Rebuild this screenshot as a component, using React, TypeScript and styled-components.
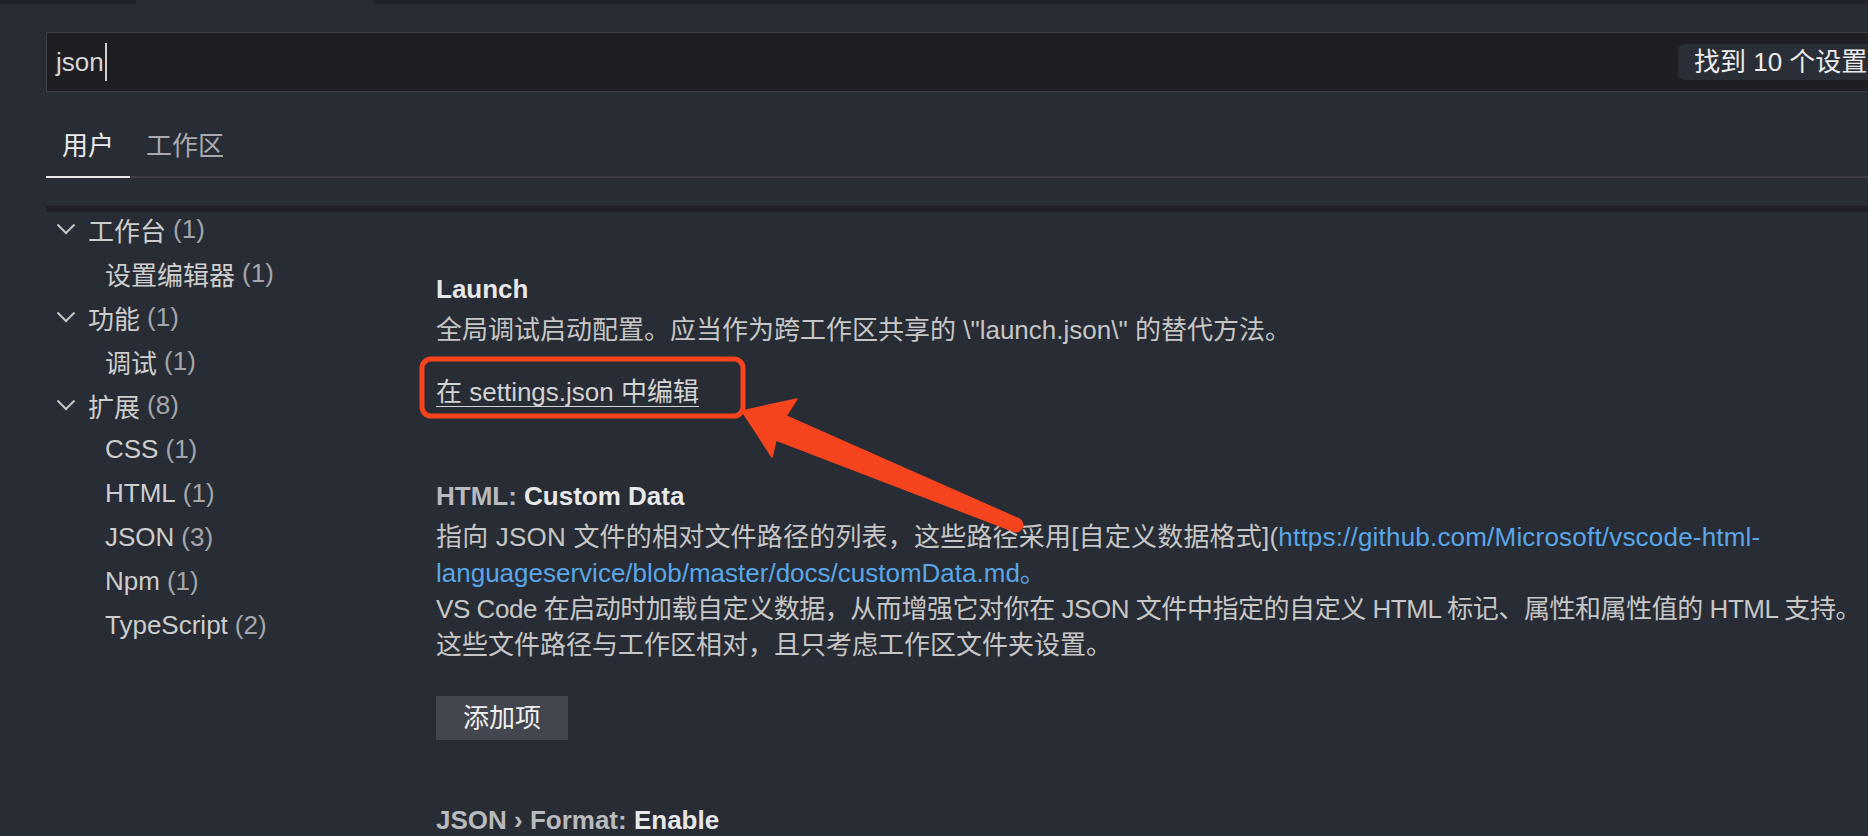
import React from "react";
import styled, { createGlobalStyle } from "styled-components";

const FONT = `"Liberation Sans", "Noto Sans CJK SC", sans-serif`;

const GlobalStyle = createGlobalStyle`
  html, body {
    margin: 0;
    padding: 0;
    background: #282c34;
    overflow: hidden;
  }
  * { box-sizing: border-box; }
`;

const Page = styled.div`
  position: relative;
  width: 1868px;
  height: 836px;
  overflow: hidden;
  background: #282c34;
  font-family: ${FONT};
  font-size: 26px;
  color: #cccccc;
`;

const TopStrip = styled.div`
  display: flex;
  height: 4px;
`;

const StripSeg = styled.div<{ $dark?: boolean; $w?: number }>`
  height: 100%;
  background: ${(p) => (p.$dark ? "#1f2228" : "transparent")};
  ${(p) => (p.$w ? `width: ${p.$w}px; flex-shrink: 0;` : "flex: 1;")}
`;

const Main = styled.div`
  padding-left: 46px;
`;

const SearchBox = styled.div`
  margin-top: 28px;
  width: 1900px;
  height: 60px;
  display: flex;
  align-items: center;
  border: 1px solid #3d4047;
  background: #1e1f23;
  padding-left: 9px;
`;

const QueryArea = styled.div`
  width: 1622px;
  flex-shrink: 0;
  display: flex;
  align-items: center;
`;

const QueryText = styled.span`
  font-size: 26px;
  line-height: 40px;
  color: #d6d6d6;
`;

const Caret = styled.span`
  display: inline-block;
  width: 2px;
  height: 38px;
  margin-left: 1px;
  background: #cfcfcf;
`;

const Badge = styled.div`
  height: 36px;
  padding: 0 16px;
  border-radius: 6px;
  background: #2a2e37;
  color: #ececec;
  font-size: 26px;
  line-height: 36px;
  white-space: nowrap;
`;

const TabBar = styled.div`
  margin-top: 30px;
  display: flex;
  border-bottom: 2px solid #3b3d42;
`;

const Tab = styled.div<{ $active?: boolean }>`
  padding: 0 16px 6px;
  line-height: 48px;
  font-size: 26px;
  margin-bottom: -2px;
  border-bottom: 2px solid ${(p) => (p.$active ? "#e8e8e8" : "transparent")};
  color: ${(p) => (p.$active ? "#ececec" : "#a9abb0")};
`;

const Body = styled.div`
  margin-top: 28px;
  padding-top: 1px;
  display: flex;
  background-image: linear-gradient(#1f2125, #1f2125);
  background-size: 100% 6px;
  background-repeat: no-repeat;
`;

const Tree = styled.div`
  width: 390px;
  flex-shrink: 0;
`;

const TreeRow = styled.div<{ $indent: number }>`
  height: 44px;
  display: flex;
  align-items: center;
  padding-left: ${(p) => p.$indent}px;
  font-size: 26px;
  color: #cdcdcd;
  white-space: nowrap;
`;

const ChevronBox = styled.svg`
  width: 20px;
  height: 12px;
  margin-right: 12px;
  flex-shrink: 0;
`;

const Count = styled.span`
  color: #a4a6aa;
  margin-left: 7px;
`;

const Content = styled.div`
  flex: 1;
  padding-top: 64px;
  min-width: 0;
`;

const SettingItem = styled.div<{ $top: number }>`
  padding-top: ${(p) => p.$top}px;
`;

const Title = styled.div`
  font-size: 26px;
  line-height: 36px;
  font-weight: 700;
  color: #e8e8e8;
  white-space: nowrap;
`;

const Category = styled.span`
  color: #b8babe;
`;

const Description = styled.div`
  margin-top: 5px;
  font-size: 26px;
  line-height: 36px;
  color: #c6c6c6;
`;

const DescLine = styled.div<{ $track?: number }>`
  white-space: nowrap;
  letter-spacing: ${(p) => p.$track ?? 0}px;
`;

const UrlLink = styled.span`
  color: #59a7e8;
`;

const EditLink = styled.div`
  margin-top: 26px;
  font-size: 26px;
  line-height: 36px;
  color: #d2d2d2;
  text-decoration: underline;
  text-underline-offset: 5px;
  text-decoration-thickness: 1px;
  white-space: nowrap;
`;

const AddButton = styled.button`
  margin-top: 33px;
  height: 44px;
  padding: 0 27px;
  border: none;
  border-radius: 0;
  background: #43464e;
  color: #f0f0f0;
  font-family: ${FONT};
  font-size: 26px;
  line-height: 44px;
`;

const Annotation = styled.svg`
  position: absolute;
  left: 0;
  top: 0;
  width: 1868px;
  height: 836px;
  pointer-events: none;
`;

const Chevron = () => (
  <ChevronBox viewBox="0 0 20 12">
    <polyline points="1.5,1.5 10,10 18.5,1.5" fill="none" stroke="#c5c5c5" strokeWidth="2" />
  </ChevronBox>
);

type TreeItem = { label: string; count: number; group?: boolean };

const treeItems: TreeItem[] = [
  { label: "工作台", count: 1, group: true },
  { label: "设置编辑器", count: 1 },
  { label: "功能", count: 1, group: true },
  { label: "调试", count: 1 },
  { label: "扩展", count: 8, group: true },
  { label: "CSS", count: 1 },
  { label: "HTML", count: 1 },
  { label: "JSON", count: 3 },
  { label: "Npm", count: 1 },
  { label: "TypeScript", count: 2 },
];

export default function App() {
  return (
    <>
      <GlobalStyle />
      <Page>
        <TopStrip>
          <StripSeg $dark $w={136} />
          <StripSeg $w={238} />
          <StripSeg $dark />
        </TopStrip>
        <Main>
          <SearchBox>
            <QueryArea>
              <QueryText>json</QueryText>
              <Caret />
            </QueryArea>
            <Badge>找到 10 个设置</Badge>
          </SearchBox>
          <TabBar>
            <Tab $active>用户</Tab>
            <Tab>工作区</Tab>
          </TabBar>
          <Body>
            <Tree>
              {treeItems.map((t) => (
                <TreeRow key={t.label} $indent={t.group ? 10 : 59}>
                  {t.group && <Chevron />}
                  <span>{t.label}</span>
                  <Count>({t.count})</Count>
                </TreeRow>
              ))}
            </Tree>
            <Content>
              <SettingItem $top={0}>
                <Title>Launch</Title>
                <Description>
                  <DescLine>全局调试启动配置。应当作为跨工作区共享的 \"launch.json\" 的替代方法。</DescLine>
                </Description>
                <EditLink>在 settings.json 中编辑</EditLink>
              </SettingItem>
              <SettingItem $top={68}>
                <Title>
                  <Category>HTML: </Category>Custom Data
                </Title>
                <Description>
                  <DescLine $track={0.2}>
                    指向 JSON 文件的相对文件路径的列表，这些路径采用[自定义数据格式](
                    <UrlLink>https://github.com/Microsoft/vscode-html-</UrlLink>
                  </DescLine>
                  <DescLine>
                    <UrlLink>languageservice/blob/master/docs/customData.md。</UrlLink>
                  </DescLine>
                  <DescLine $track={-0.45}>
                    VS Code 在启动时加载自定义数据，从而增强它对你在 JSON 文件中指定的自定义 HTML 标记、属性和属性值的 HTML 支持。
                  </DescLine>
                  <DescLine>这些文件路径与工作区相对，且只考虑工作区文件夹设置。</DescLine>
                </Description>
                <AddButton>添加项</AddButton>
              </SettingItem>
              <SettingItem $top={62}>
                <Title>
                  <Category>JSON › Format: </Category>Enable
                </Title>
              </SettingItem>
            </Content>
          </Body>
        </Main>
        <Annotation viewBox="0 0 1868 836">
          <rect x="422" y="359" width="321" height="57" rx="9" ry="9" fill="none" stroke="#f5441e" strokeWidth="5" />
          <path
            d="M742 411 L797 399 L786 416 L1019 519 A6.5 6.5 0 0 1 1013 531 L776 440 L772 457 Z"
            fill="#f5441e"
            stroke="#f5441e"
            strokeWidth="1.5"
            strokeLinejoin="round"
          />
        </Annotation>
      </Page>
    </>
  );
}
